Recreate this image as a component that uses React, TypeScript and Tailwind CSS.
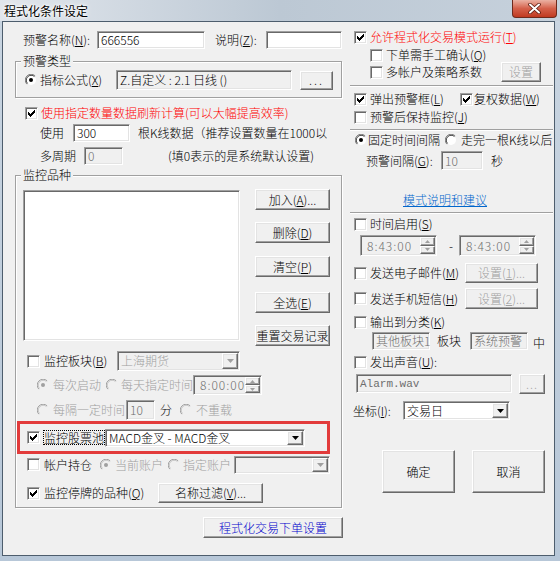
import React from "react";

const sunken =
  "border border-t-[#a0a0a0] border-l-[#a0a0a0] border-r-white border-b-white shadow-[inset_1px_1px_0_#696969,inset_-1px_-1px_0_#e3e3e3]";
const raised =
  "border border-t-white border-l-white border-r-[#696969] border-b-[#696969] shadow-[inset_-1px_-1px_0_#a0a0a0,inset_1px_1px_0_#e3e3e3] bg-[#f0f0f0]";
const sep = "h-[2px] border-t border-t-[#a0a0a0] border-b border-b-white";
const group =
  "border border-[#a0a0a0] shadow-[inset_1px_1px_0_#fff,1px_1px_0_#fff]";

function Check({ on, dis, className = "" }: { on?: boolean; dis?: boolean; className?: string }) {
  const c = dis ? "#a0a0a0" : "#000";
  return (
    <span
      className={`w-[13px] h-[13px] shrink-0 flex items-center justify-center ${dis ? "bg-[#f0f0f0]" : "bg-white"} ${sunken} ${className}`}
    >
      {on && (
        <svg width="7" height="7" viewBox="0 0 7 7" shapeRendering="crispEdges">
          <rect x="6" y="0" width="1" height="1" fill={c} />
          <rect x="5" y="1" width="2" height="1" fill={c} />
          <rect x="0" y="2" width="1" height="1" fill={c} />
          <rect x="4" y="2" width="3" height="1" fill={c} />
          <rect x="0" y="3" width="2" height="1" fill={c} />
          <rect x="3" y="3" width="3" height="1" fill={c} />
          <rect x="0" y="4" width="5" height="1" fill={c} />
          <rect x="1" y="5" width="3" height="1" fill={c} />
          <rect x="2" y="6" width="1" height="1" fill={c} />
        </svg>
      )}
    </span>
  );
}

function Radio({ on, dis, className = "" }: { on?: boolean; dis?: boolean; className?: string }) {
  return (
    <svg width="12" height="12" viewBox="0 0 12 12" className={`shrink-0 ${className}`}>
      <circle cx="6" cy="6" r="5" fill={dis ? "#f0f0f0" : "#fff"} />
      <path d="M10.17 1.83 A5.9 5.9 0 0 0 1.83 10.17" stroke={dis ? "#a0a0a0" : "#808080"} strokeWidth="1" fill="none" />
      <path d="M9.46 2.54 A4.9 4.9 0 0 0 2.54 9.46" stroke={dis ? "#c8c8c8" : "#404040"} strokeWidth="1" fill="none" />
      {on && <circle cx="6" cy="6" r="2" fill={dis ? "#a0a0a0" : "#000"} />}
    </svg>
  );
}

function Field({
  className = "",
  children,
  gray,
  dim,
}: {
  className?: string;
  children?: React.ReactNode;
  gray?: boolean;
  dim?: boolean;
}) {
  return (
    <div
      className={`${sunken} ${gray ? "bg-[#f0f0f0]" : "bg-white"} ${dim ? "text-[#6d6d6d]" : "text-black"} flex items-center pl-[3px] whitespace-nowrap shrink-0 ${className}`}
    >
      {children}
    </div>
  );
}

function Btn({
  className = "",
  children,
  dis,
  blue,
}: {
  className?: string;
  children?: React.ReactNode;
  dis?: boolean;
  blue?: boolean;
}) {
  return (
    <div
      className={`${raised} flex items-center justify-center shrink-0 whitespace-nowrap ${dis ? "text-[#a0a0a0]" : blue ? "text-[#0000cc]" : "text-black"} ${className}`}
    >
      {children}
    </div>
  );
}

function Combo({ className = "", children, dis }: { className?: string; children?: React.ReactNode; dis?: boolean }) {
  return (
    <div
      className={`${sunken} ${dis ? "bg-[#f0f0f0] text-[#a0a0a0]" : "bg-white text-black"} flex items-stretch p-[1px] shrink-0 ${className}`}
    >
      <div className="flex-1 flex items-center pl-[2px] whitespace-nowrap">{children}</div>
      <div className={`${raised} w-[16px] flex items-center justify-center`}>
        <svg width="7" height="4" viewBox="0 0 7 4">
          <path d="M0 0h7L3.5 4z" fill={dis ? "#a0a0a0" : "#000"} />
        </svg>
      </div>
    </div>
  );
}

function TimeField({ className = "", text }: { className?: string; text: string }) {
  return (
    <div className={`${sunken} bg-[#f0f0f0] text-[#6d6d6d] flex items-stretch p-[1px] shrink-0 ${className}`}>
      <div className="flex-1 flex items-center pl-[5px] tracking-[1px] whitespace-nowrap">{text}</div>
      <div className="flex flex-col w-[15px]">
        <div className={`${raised} flex-1 flex items-center justify-center`}>
          <svg width="5" height="3" viewBox="0 0 5 3">
            <path d="M0 3h5L2.5 0z" fill="#a0a0a0" />
          </svg>
        </div>
        <div className={`${raised} flex-1 flex items-center justify-center`}>
          <svg width="5" height="3" viewBox="0 0 5 3">
            <path d="M0 0h5L2.5 3z" fill="#a0a0a0" />
          </svg>
        </div>
      </div>
    </div>
  );
}

export default function App() {
  return (
    <div className="w-[560px] h-[561px] bg-linear-to-b from-[#c9d5e1] to-[#b7c7d8] flex flex-col font-['Noto_Sans_CJK_SC',sans-serif] font-light text-[12px] leading-[14px] text-black overflow-hidden">
      {/* title bar */}
      <div className="h-[21px] shrink-0 flex items-start bg-linear-to-r from-[#e1e6ec] via-[#bcc8d4] to-[#c6d1dc]">
        <div className="pl-[4px] pt-[4px] whitespace-nowrap font-normal [text-shadow:0_0_6px_#fff,0_0_3px_#fff,0_0_2px_#fff]">
          程式化条件设定
        </div>
        <div className="ml-auto mr-[3px] w-[45px] h-[18px] rounded-b-[4px] border border-t-0 border-[#6e2a1c] bg-linear-to-b from-[#eab1a3] via-[#d4604a] to-[#c0391f] flex items-center justify-center">
          <svg width="13" height="11" viewBox="0 0 13 11">
            <path d="M2 1.5 L11 9.5 M11 1.5 L2 9.5" stroke="#5a1a0e" strokeWidth="3.6" strokeLinecap="round" />
            <path d="M2 1.5 L11 9.5 M11 1.5 L2 9.5" stroke="#fff" strokeWidth="2" strokeLinecap="round" />
          </svg>
        </div>
      </div>

      {/* client area */}
      <div className="ml-[2px] w-[553px] h-[535px] shrink-0 border border-[#4d5d6d] bg-[#f0f0f0] flex items-start">
        {/* left column */}
        <div className="ml-[12px] w-[327px] flex flex-col shrink-0">
          <div className="mt-[9px] h-[18px] flex items-center">
            <span className="ml-[8px] w-[74px] whitespace-nowrap">
              预警名称(<u>N</u>):
            </span>
            <Field className="w-[108px] h-[18px]">666556</Field>
            <span className="ml-[10px] w-[51px] whitespace-nowrap">
              说明(<u>Z</u>):
            </span>
            <Field className="w-[76px] h-[18px]" />
          </div>

          <fieldset className={`mt-[5px] pb-[7px] ${group}`}>
            <legend className="ml-[5px] px-[2px] leading-[14px] bg-[#f0f0f0]">预警类型</legend>
            <div className="mt-[2px] h-[20px] flex items-center">
              <Radio on className="ml-[9px]" />
              <span className="ml-[3px] w-[76px] whitespace-nowrap">
                指标公式(<u>X</u>)
              </span>
              <Field gray className="w-[176px] h-[20px]">
                Z.自定义 : 2.1 日线 ()
              </Field>
              <Btn className="ml-[8px] w-[33px] h-[19px] tracking-[2px]">...</Btn>
            </div>
          </fieldset>

          <div className="mt-[8px] h-[14px] flex items-center">
            <Check on className="ml-[10px]" />
            <span className="ml-[3px] text-[#ff0000] whitespace-nowrap">
              使用指定数量数据刷新计算(可以大幅提高效率)
            </span>
          </div>

          <div className="mt-[4px] h-[18px] flex items-center">
            <span className="ml-[25px] w-[33px]">使用</span>
            <Field className="w-[57px] h-[18px]">300</Field>
            <span className="ml-[8px] whitespace-nowrap">根K线数据（推荐设置数量在1000以</span>
          </div>

          <div className="mt-[5px] h-[18px] flex items-center">
            <span className="ml-[25px] w-[44px]">多周期</span>
            <Field gray dim className="w-[39px] h-[18px]">
              0
            </Field>
            <span className="ml-[45px] whitespace-nowrap">(填0表示的是系统默认设置)</span>
          </div>

          <fieldset className={`mt-[3px] pb-[4px] ${group}`}>
            <legend className="ml-[5px] px-[2px] leading-[14px] bg-[#f0f0f0]">监控品种</legend>
            <div className="flex items-start">
              <div className={`ml-[7px] mt-[8px] w-[217px] h-[151px] bg-white shrink-0 ${sunken}`} />
              <div className="ml-[15px] mt-[7px] w-[75px] flex flex-col">
                <Btn className="h-[21px]">
                  加入(<u>A</u>)...
                </Btn>
                <Btn className="mt-[12px] h-[21px]">
                  删除(<u>D</u>)
                </Btn>
                <Btn className="mt-[13px] h-[21px]">
                  清空(<u>P</u>)
                </Btn>
                <Btn className="mt-[15px] h-[21px]">
                  全选(<u>E</u>)
                </Btn>
                <Btn className="mt-[12px] h-[21px]">重置交易记录</Btn>
              </div>
            </div>

            <div className="mt-[5px] h-[20px] flex items-center">
              <Check className="ml-[11px]" />
              <span className="ml-[4px] w-[73px] whitespace-nowrap">
                监控板块(<u>B</u>)
              </span>
              <Combo dis className="w-[123px] h-[20px]">
                上海期货
              </Combo>
            </div>

            <div className="mt-[4px] h-[20px] flex items-center text-[#a0a0a0]">
              <Radio on dis className="ml-[21px]" />
              <span className="ml-[4px] w-[48px] whitespace-nowrap">每次启动</span>
              <Radio dis className="ml-[5px]" />
              <span className="ml-[3px] w-[72px] whitespace-nowrap">每天指定时间</span>
              <TimeField className="w-[69px] h-[20px]" text="8:00:00" />
            </div>

            <div className="mt-[5px] h-[20px] flex items-center text-[#a0a0a0]">
              <Radio dis className="ml-[21px]" />
              <span className="ml-[4px] w-[73px] whitespace-nowrap">每隔一定时间</span>
              <Field gray dim className="w-[29px] h-[20px]">
                10
              </Field>
              <span className="ml-[5px] text-black">分</span>
              <Radio dis className="ml-[8px]" />
              <span className="ml-[4px] whitespace-nowrap">不重载</span>
            </div>

            <div className="mt-[1px] ml-[1px] w-[313px] h-[33px] border-[3px] border-[#e23b3b] flex items-center">
              <Check on className="ml-[7px]" />
              <span className="ml-[3px] border border-dotted border-black whitespace-nowrap leading-[13px]">
                监控股票池
              </span>
              <Combo className="w-[200px] h-[18px]">MACD金叉 - MACD金叉</Combo>
            </div>

            <div className="mt-[1px] h-[19px] flex items-center">
              <Check className="ml-[11px]" />
              <span className="ml-[4px] w-[48px] whitespace-nowrap">帐户持仓</span>
              <Radio on dis className="ml-[8px]" />
              <span className="ml-[3px] w-[50px] whitespace-nowrap text-[#a0a0a0]">当前账户</span>
              <Radio dis className="ml-[3px]" />
              <span className="ml-[3px] w-[51px] whitespace-nowrap text-[#a0a0a0]">指定账户</span>
              <Combo dis className="w-[96px] h-[18px]" />
            </div>

            <div className="mt-[9px] h-[20px] flex items-center">
              <Check on className="ml-[11px]" />
              <span className="ml-[4px] w-[114px] whitespace-nowrap">
                监控停牌的品种(<u>Q</u>)
              </span>
              <Btn className="w-[105px] h-[20px]">
                名称过滤(<u>V</u>)...
              </Btn>
            </div>
          </fieldset>

          <Btn blue className="mt-[9px] ml-[188px] w-[140px] h-[21px]">
            程式化交易下单设置
          </Btn>
        </div>

        {/* right column */}
        <div className="ml-[8px] w-[203px] flex flex-col shrink-0">
          <div className="mt-[8px] h-[14px] flex items-center">
            <Check on className="ml-[4px]" />
            <span className="ml-[3px] text-[#ff0000] whitespace-nowrap">
              允许程式化交易模式运行(<u>T</u>)
            </span>
          </div>
          <div className="mt-[4px] h-[14px] flex items-center">
            <Check className="ml-[20px]" />
            <span className="ml-[3px] whitespace-nowrap">
              下单需手工确认(<u>Q</u>)
            </span>
          </div>
          <div className="h-[20px] flex items-center">
            <Check className="ml-[20px]" />
            <span className="ml-[3px] w-[96px] whitespace-nowrap">多帐户及策略系数</span>
            <Btn dis className="ml-[19px] w-[40px] h-[20px]">
              设置
            </Btn>
          </div>
          <div className={`mt-[3px] ${sep}`} />

          <div className="mt-[5px] h-[14px] flex items-center">
            <Check on className="ml-[4px]" />
            <span className="ml-[3px] w-[90px] whitespace-nowrap">
              弹出预警框(<u>L</u>)
            </span>
            <Check on />
            <span className="ml-[1px] whitespace-nowrap">
              复权数据(<u>W</u>)
            </span>
          </div>
          <div className="mt-[4px] h-[14px] flex items-center">
            <Check className="ml-[4px]" />
            <span className="ml-[3px] whitespace-nowrap">
              预警后保持监控(<u>J</u>)
            </span>
          </div>
          <div className={`mt-[5px] ${sep}`} />

          <div className="mt-[2px] h-[14px] flex items-center">
            <Radio on className="ml-[5px]" />
            <span className="ml-[1px] w-[77px] whitespace-nowrap">固定时间间隔</span>
            <Radio />
            <span className="ml-[4px] whitespace-nowrap">走完一根K线以后</span>
          </div>
          <div className="mt-[4px] h-[19px] flex items-center">
            <span className="ml-[16px] w-[75px] whitespace-nowrap">
              预警间隔(<u>G</u>):
            </span>
            <Field gray dim className="w-[42px] h-[19px]">
              10
            </Field>
            <span className="ml-[8px]">秒</span>
          </div>

          <div className="mt-[23px] h-[14px] flex items-center">
            <span className="ml-[53px] text-[#0066cc] underline whitespace-nowrap">模式说明和建议</span>
          </div>
          <div className={`mt-[5px] ${sep}`} />

          <div className="mt-[3px] h-[14px] flex items-center">
            <Check className="ml-[4px]" />
            <span className="ml-[3px] whitespace-nowrap">
              时间启用(<u>S</u>)
            </span>
          </div>
          <div className="mt-[4px] h-[21px] flex items-center">
            <TimeField className="ml-[10px] w-[77px] h-[21px]" text="8:43:00" />
            <span className="ml-[12px]">-</span>
            <TimeField className="ml-[6px] w-[77px] h-[21px]" text="8:43:00" />
          </div>

          <div className="mt-[7px] h-[20px] flex items-center">
            <Check className="ml-[4px]" />
            <span className="ml-[3px] w-[95px] whitespace-nowrap">
              发送电子邮件(<u>M</u>)
            </span>
            <Btn dis className="w-[73px] h-[20px]">
              设置(<u>1</u>)...
            </Btn>
          </div>
          <div className="mt-[5px] h-[21px] flex items-center">
            <Check className="ml-[4px]" />
            <span className="ml-[3px] w-[95px] whitespace-nowrap">
              发送手机短信(<u>H</u>)
            </span>
            <Btn dis className="w-[73px] h-[21px]">
              设置(<u>2</u>)...
            </Btn>
          </div>

          <div className="mt-[6px] h-[14px] flex items-center">
            <Check className="ml-[4px]" />
            <span className="ml-[3px] whitespace-nowrap">
              输出到分类(<u>K</u>)
            </span>
          </div>
          <div className="mt-[3px] h-[18px] flex items-center">
            <Field gray dim className="ml-[22px] w-[58px] h-[18px]">
              其他板块1
            </Field>
            <span className="ml-[7px]">板块</span>
            <Field gray dim className="ml-[9px] w-[58px] h-[18px]">
              系统预警
            </Field>
            <span className="ml-[5px] mt-[3px]">中</span>
          </div>

          <div className="mt-[5px] h-[14px] flex items-center">
            <Check className="ml-[4px]" />
            <span className="ml-[3px] whitespace-nowrap">
              发出声音(<u>U</u>):
            </span>
          </div>
          <div className="mt-[5px] h-[19px] flex items-center">
            <Field gray dim className="ml-[6px] w-[156px] h-[19px] font-['Liberation_Mono',monospace] text-[11px]">
              Alarm.wav
            </Field>
            <Btn dis className="ml-[7px] w-[26px] h-[20px] tracking-[1px]">
              ...
            </Btn>
          </div>

          <div className="mt-[8px] h-[19px] flex items-center">
            <span className="ml-[3px] w-[50px] whitespace-nowrap">
              坐标(<u>I</u>):
            </span>
            <Combo className="w-[107px] h-[19px]">交易日</Combo>
          </div>

          <div className="mt-[30px] h-[43px] flex items-center">
            <Btn className="ml-[32px] w-[73px] h-[43px]">确定</Btn>
            <Btn className="ml-[17px] w-[73px] h-[43px]">取消</Btn>
          </div>
        </div>
      </div>
    </div>
  );
}
